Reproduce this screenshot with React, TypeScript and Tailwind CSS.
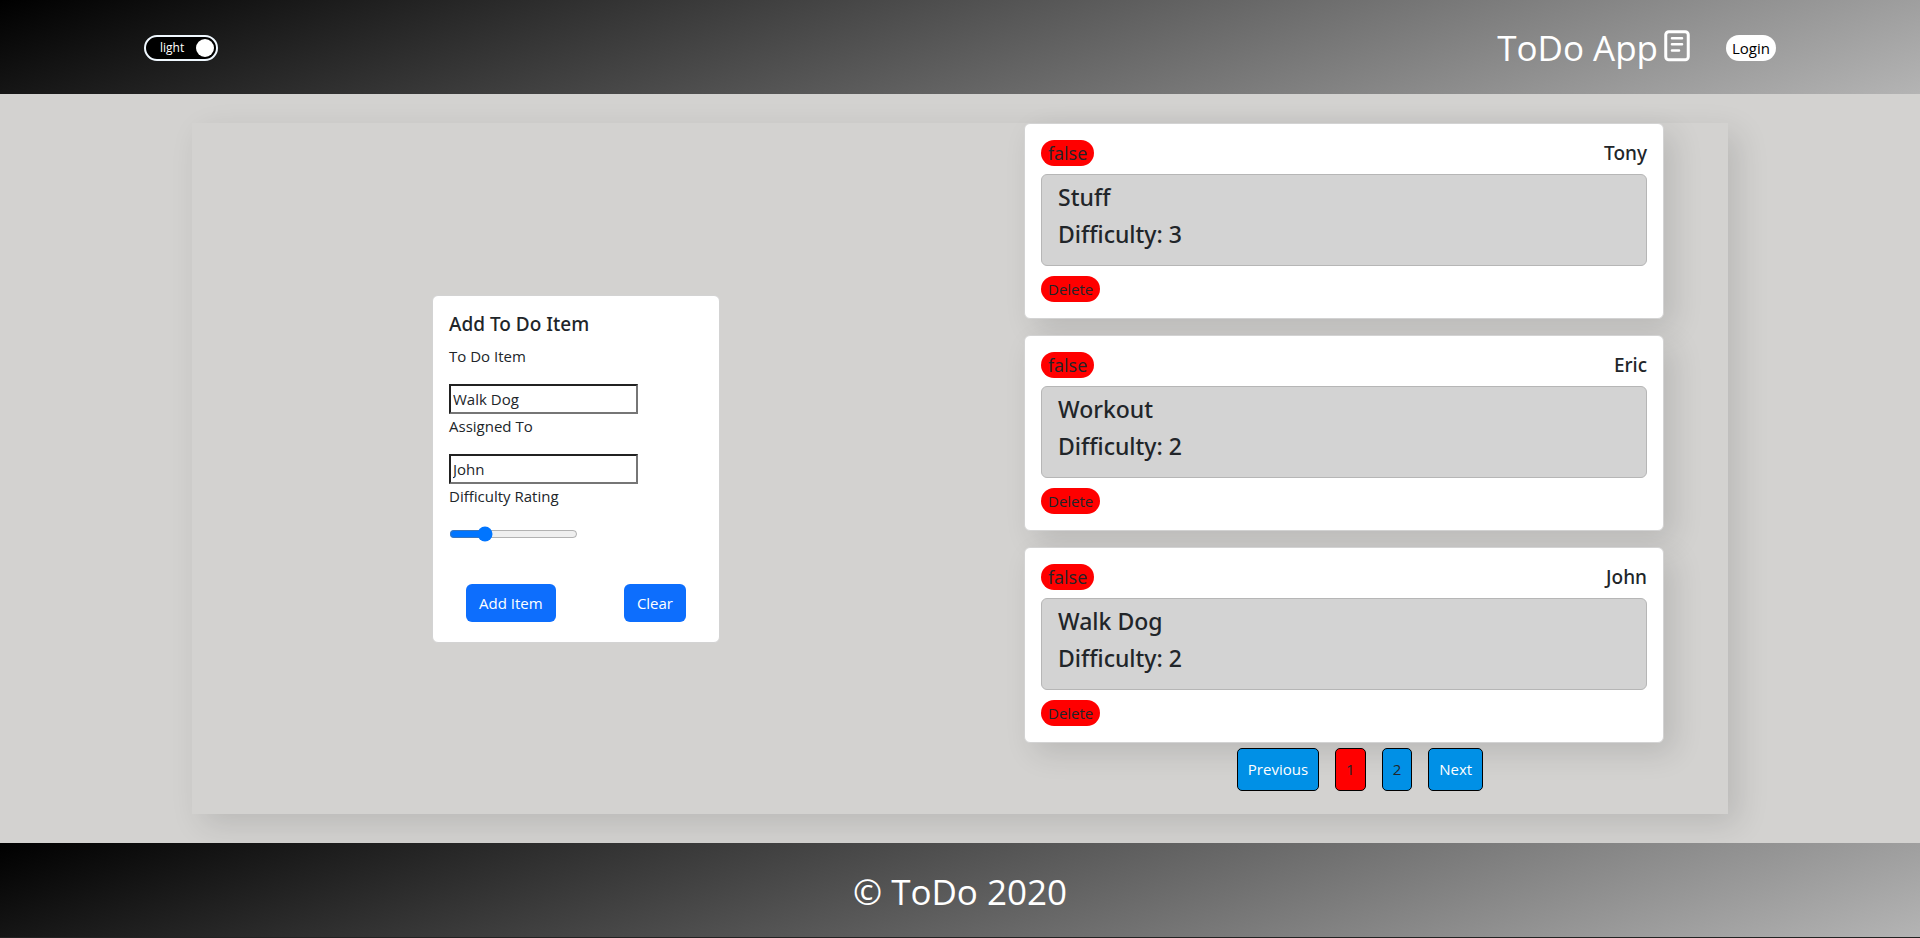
import { useState } from "react";

type Todo = { id: number; text: string; assignee: string; difficulty: number; complete: boolean };

const todos: Todo[] = [
  { id: 1, text: "Stuff", assignee: "Tony", difficulty: 3, complete: false },
  { id: 2, text: "Workout", assignee: "Eric", difficulty: 2, complete: false },
  { id: 3, text: "Walk Dog", assignee: "John", difficulty: 2, complete: false },
];

function ThemeToggle() {
  return (
    <button
      type="button"
      role="switch"
      aria-checked="true"
      className="flex h-[26px] w-[74px] items-center justify-between rounded-full border-2 border-[#f0f8ff] bg-black pr-0.5 pl-[14px] text-[12px] leading-none text-white"
    >
      <span>light</span>
      <span className="size-[18px] rounded-full bg-white" />
    </button>
  );
}

function NoteIcon() {
  return (
    <svg className="mb-1 h-8 w-[26px]" viewBox="0 0 26 32" fill="none" stroke="white" strokeLinecap="round" aria-hidden="true">
      <rect x="1.75" y="1.75" width="22.5" height="28" rx="3" strokeWidth="3" />
      <path d="M8 8.3H18M8 14.3H18M8 20.5H15" strokeWidth="2.6" />
    </svg>
  );
}

function Header() {
  return (
    <header className="flex h-[94px] items-center justify-between bg-[linear-gradient(160deg,#000000,#b4b4b4)] px-[7.5%] pt-0.5">
      <ThemeToggle />
      <div className="flex items-center gap-9">
        <h1 className="flex items-center gap-1.5 text-[35px] leading-[48px] text-white">
          ToDo App
          <NoteIcon />
        </h1>
        <button type="button" className="h-[26px] rounded-full bg-white px-1.5 text-[15px] leading-[26px] text-black">
          Login
        </button>
      </div>
    </header>
  );
}

const fieldClass =
  "mt-4 h-[30px] w-[189px] border-2 border-t-[#212121] border-r-[#767676] border-b-[#767676] border-l-[#212121] px-0.5 text-[15px] text-[#212529] outline-none";

function TodoForm() {
  const [text, setText] = useState("Walk Dog");
  const [assignee, setAssignee] = useState("John");
  const [difficulty, setDifficulty] = useState(2);

  const clear = () => {
    setText("");
    setAssignee("");
    setDifficulty(1);
  };

  return (
    <form
      onSubmit={(e) => e.preventDefault()}
      className="flex w-72 flex-col items-start rounded-md border border-[#d3d3d3] bg-white p-4 text-[15px] leading-6"
    >
      <h2 className="mb-2 font-['Noto_Sans','Open_Sans',sans-serif] text-[19px] leading-6 font-medium">Add To Do Item</h2>
      <label htmlFor="todo-text">To Do Item</label>
      <input id="todo-text" className={fieldClass} value={text} onChange={(e) => setText(e.target.value)} />
      <label htmlFor="todo-assignee">Assigned To</label>
      <input id="todo-assignee" className={fieldClass} value={assignee} onChange={(e) => setAssignee(e.target.value)} />
      <label htmlFor="todo-difficulty">Difficulty Rating</label>
      <input
        id="todo-difficulty"
        type="range"
        min={1}
        max={5}
        value={difficulty}
        onChange={(e) => setDifficulty(Number(e.target.value))}
        className="mt-[18px] h-4 w-[129px] accent-[#0075ff]"
      />
      <div className="mt-[42px] flex w-full justify-between px-[17px] pb-1 text-white">
        <button type="submit" className="h-[38px] rounded-md bg-[#0d6efd] px-[13px]">
          Add Item
        </button>
        <button type="button" onClick={clear} className="h-[38px] rounded-md bg-[#0d6efd] px-[13px]">
          Clear
        </button>
      </div>
    </form>
  );
}

function TodoCard({ todo }: { todo: Todo }) {
  return (
    <li className="rounded-md border border-[#d3d3d3] bg-white p-4 shadow-[10px_10px_30px_rgba(0,0,0,0.12)]">
      <div className="flex h-[26px] items-center justify-between leading-[26px]">
        <button type="button" className="h-[26px] rounded-full bg-[red] px-[7px] text-[18px] leading-[26px]">
          {String(todo.complete)}
        </button>
        <span className="font-['Noto_Sans','Open_Sans',sans-serif] text-[19px] font-medium">{todo.assignee}</span>
      </div>
      <div className="mt-2 rounded-md border border-[#b6b6b6] bg-[#d3d3d3] px-4 pt-2 pb-4 font-['Noto_Sans','Open_Sans',sans-serif] text-[23px] leading-[29px] font-medium">
        <h3 className="mb-2">{todo.text}</h3>
        <p>Difficulty: {todo.difficulty}</p>
      </div>
      <button type="button" className="mt-2.5 block h-[26px] rounded-full bg-[red] px-[7px] text-[15px] leading-[26px]">
        Delete
      </button>
    </li>
  );
}

function Pagination() {
  const base = "h-[43px] rounded-[5px] border border-black px-2.5";
  return (
    <nav aria-label="Pagination" className="mt-[5px] flex justify-center gap-4 pl-8 text-[15px]">
      <button type="button" className={`${base} bg-[#0090e6] text-white`}>Previous</button>
      <button type="button" aria-current="page" className={`${base} bg-[red]`}>1</button>
      <button type="button" className={`${base} bg-[#0090e6]`}>2</button>
      <button type="button" className={`${base} bg-[#0090e6] text-white`}>Next</button>
    </nav>
  );
}

export default function App() {
  return (
    <div className="flex min-h-screen flex-col border-b border-[#222222] bg-[#d3d2d0] font-['Open_Sans','Noto_Sans',sans-serif] text-[#212529]">
      <Header />
      <main className="grow py-[29px]">
        <div className="mx-auto grid w-4/5 grid-cols-2 bg-[#d3d2d0] shadow-[10px_10px_30px_rgba(0,0,0,0.12)]">
          <section className="flex items-center justify-center">
            <TodoForm />
          </section>
          <section className="pb-[23px]">
            <ul className="mx-auto flex w-5/6 flex-col gap-4">
              {todos.map((todo) => (
                <TodoCard key={todo.id} todo={todo} />
              ))}
            </ul>
            <Pagination />
          </section>
        </div>
      </main>
      <footer className="relative flex h-[94px] items-center justify-center bg-[linear-gradient(160deg,#000000,#b4b4b4)] pt-1 text-[35px] leading-[48px] text-white">
        <p>© ToDo 2020</p>
      </footer>
    </div>
  );
}
